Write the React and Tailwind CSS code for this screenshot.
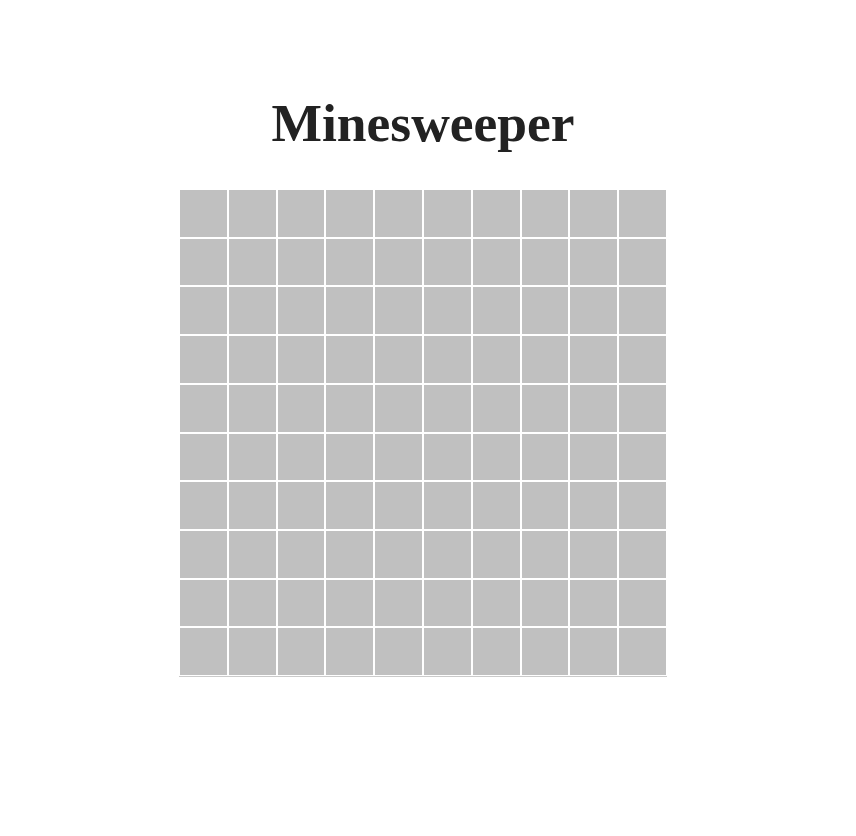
const ROWS = 10;
const COLS = 10;

function Cell() {
  return <div className="bg-[#c0c0c0] border border-white" />;
}

export default function App() {
  const cells = Array.from({ length: ROWS * COLS }, (_, i) => i);

  return (
    <div className="min-h-screen bg-white w-[846px] flex flex-col items-center pt-[97px]" style={{ fontFamily: '"Liberation Serif", "Times New Roman", serif' }}>
      <h1 className="text-[53.5px] leading-none font-bold text-[#222]">Minesweeper</h1>
      <div className="mt-[38.5px] w-[488px] h-[488px] grid grid-cols-10 grid-rows-10 border-b border-[#cacaca]">
        {cells.map((i) => (
          <Cell key={i} />
        ))}
      </div>
    </div>
  );
}
